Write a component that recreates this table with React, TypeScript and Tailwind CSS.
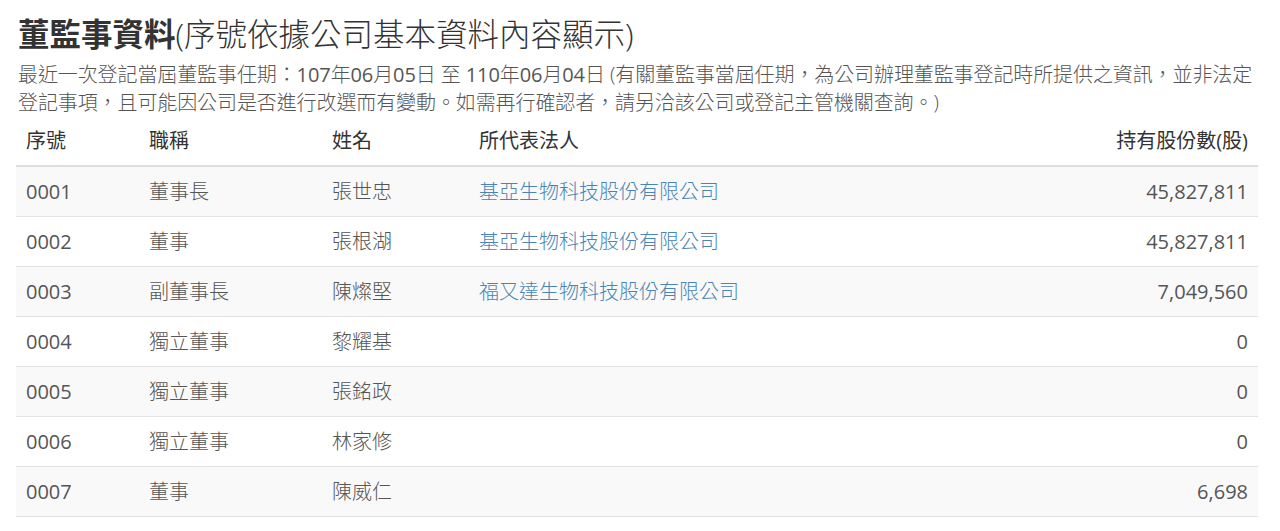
import React from 'react';

interface Director {
  no: string;
  title: string;
  name: string;
  rep?: string;
  shares: string;
}

const rows: Director[] = [
  { no: '0001', title: '董事長', name: '張世忠', rep: '基亞生物科技股份有限公司', shares: '45,827,811' },
  { no: '0002', title: '董事', name: '張根湖', rep: '基亞生物科技股份有限公司', shares: '45,827,811' },
  { no: '0003', title: '副董事長', name: '陳燦堅', rep: '福又達生物科技股份有限公司', shares: '7,049,560' },
  { no: '0004', title: '獨立董事', name: '黎耀基', shares: '0' },
  { no: '0005', title: '獨立董事', name: '張銘政', shares: '0' },
  { no: '0006', title: '獨立董事', name: '林家修', shares: '0' },
  { no: '0007', title: '董事', name: '陳威仁', shares: '6,698' },
];

const font = "font-['Open_Sans','Noto_Sans_CJK_TC',sans-serif]";

export default function App() {
  return (
    <div className={`${font} bg-white min-h-[531px] pl-[16px] pt-[17px] text-[#555]`}>
      <h3 className="text-[31.5px] leading-[34px] text-[#333] pl-[2px] font-light">
        <span className="font-bold">董監事資料</span>
        <span>(序號依據公司基本資料內容顯示)</span>
      </h3>

      <p className="mt-[10px] w-[1242px] pl-[2px] text-[20px] leading-[28px] tracking-[-0.1px] font-light">
        最近一次登記當屆董監事任期：<span className="font-normal">107</span>年<span className="font-normal">06</span>月<span className="font-normal">05</span>日 至 <span className="font-normal">110</span>年<span className="font-normal">06</span>月<span className="font-normal">04</span>日 (有關董監事當屆任期，為公司辦理董監事登記時所提供之資訊，並非法定
        <br />
        登記事項，且可能因公司是否進行改選而有變動。如需再行確認者，請另洽該公司或登記主管機關查詢。)
      </p>

      <div className="w-[1242px] text-[20px] leading-[28px] font-light">
        {/* header */}
        <div className="grid grid-cols-[123px_183px_147px_1fr_260px] border-b-[2px] border-[#ddd] text-[#333] font-normal">
          <div className="p-[10px]">序號</div>
          <div className="p-[10px]">職稱</div>
          <div className="p-[10px]">姓名</div>
          <div className="p-[10px]">所代表法人</div>
          <div className="p-[10px] text-right">持有股份數(股)</div>
        </div>

        {rows.map((r, i) => (
          <div
            key={r.no}
            className={`grid grid-cols-[123px_183px_147px_1fr_260px] border-b border-[#e3e3e3] ${
              i % 2 === 0 ? 'bg-[#f9f9f9]' : 'bg-white'
            }`}
          >
            <div className="px-[10px] py-[10.5px] font-normal">{r.no}</div>
            <div className="px-[10px] py-[10.5px]">{r.title}</div>
            <div className="px-[10px] py-[10.5px]">{r.name}</div>
            <div className="px-[10px] py-[10.5px]">
              {r.rep && <a className="text-[#4a84b6]">{r.rep}</a>}
            </div>
            <div className="px-[10px] py-[10.5px] text-right font-normal">{r.shares}</div>
          </div>
        ))}
      </div>
    </div>
  );
}
